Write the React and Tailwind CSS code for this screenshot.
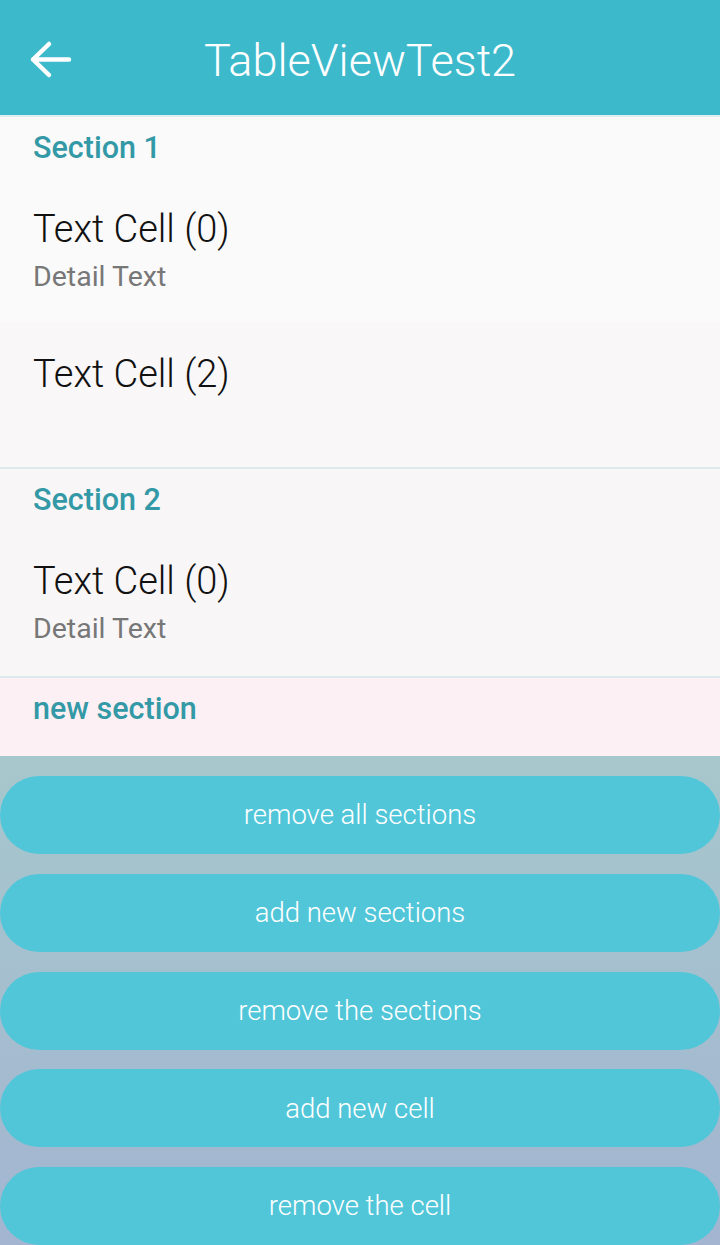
import React from "react";

const font = { fontFamily: "Roboto, 'Noto Sans', sans-serif" };

function SectionHeader({ children, bg, h = "h-[60px]" }) {
  return (
    <div className={`${h} ${bg} px-[33px] pt-[13px]`}>
      <div className="text-[30.5px] leading-[36px] font-medium text-[#3399a6]">{children}</div>
    </div>
  );
}

function Cell({ title, detail, bg, h = "h-[145px]" }) {
  return (
    <div className={`${h} ${bg} px-[33px] pt-[30px]`}>
      <div className="text-[38px] leading-[44px] font-light text-[#111111]">{title}</div>
      {detail && (
        <div className="mt-[10px] text-[28.5px] leading-[32px] text-[#777777]">{detail}</div>
      )}
    </div>
  );
}

function Btn({ children }) {
  return (
    <div className="h-[78px] w-full rounded-[39px] bg-[#52c6d9] flex items-center justify-center text-white text-[27.5px] font-light">
      {children}
    </div>
  );
}

export default function App() {
  return (
    <div className="w-[720px] h-[1245px] overflow-hidden flex flex-col" style={font}>
      <div className="h-[115px] bg-[#3db9cc] flex items-center relative">
        <svg className="absolute left-[28px] top-[40px]" width="46" height="40" viewBox="0 0 46 40">
          <path d="M5 19.5 H41 M21 4 L5 19.5 L21 35" fill="none" stroke="white" strokeWidth="4.5" strokeLinecap="round" strokeLinejoin="round" />
        </svg>
        <div className="w-full text-center text-white text-[45px] font-light pt-[6px]">TableViewTest2</div>
      </div>
      <div className="h-[2px] bg-[#e0eef2]" />
      <SectionHeader bg="bg-[#fafafa]">Section 1</SectionHeader>
      <Cell title="Text Cell (0)" detail="Detail Text" bg="bg-[#fafafa]" />
      <Cell title="Text Cell (2)" bg="bg-[#f9f7f8]" />
      <div className="h-[2px] bg-[#dce9ed]" />
      <SectionHeader bg="bg-[#f9f6f7]">Section 2</SectionHeader>
      <Cell title="Text Cell (0)" detail="Detail Text" bg="bg-[#f9f6f7]" h="h-[147px]" />
      <div className="h-[2px] bg-[#dce9ed]" />
      <SectionHeader bg="bg-[#fcf0f4]" h="h-[78px]">new section</SectionHeader>
      <div className="flex-1 bg-gradient-to-b from-[#a6c7cc] to-[#a3b5d1] pt-[20px] flex flex-col gap-[19.75px]">
        <Btn>remove all sections</Btn>
        <Btn>add new sections</Btn>
        <Btn>remove the sections</Btn>
        <Btn>add new cell</Btn>
        <Btn>remove the cell</Btn>
      </div>
    </div>
  );
}
